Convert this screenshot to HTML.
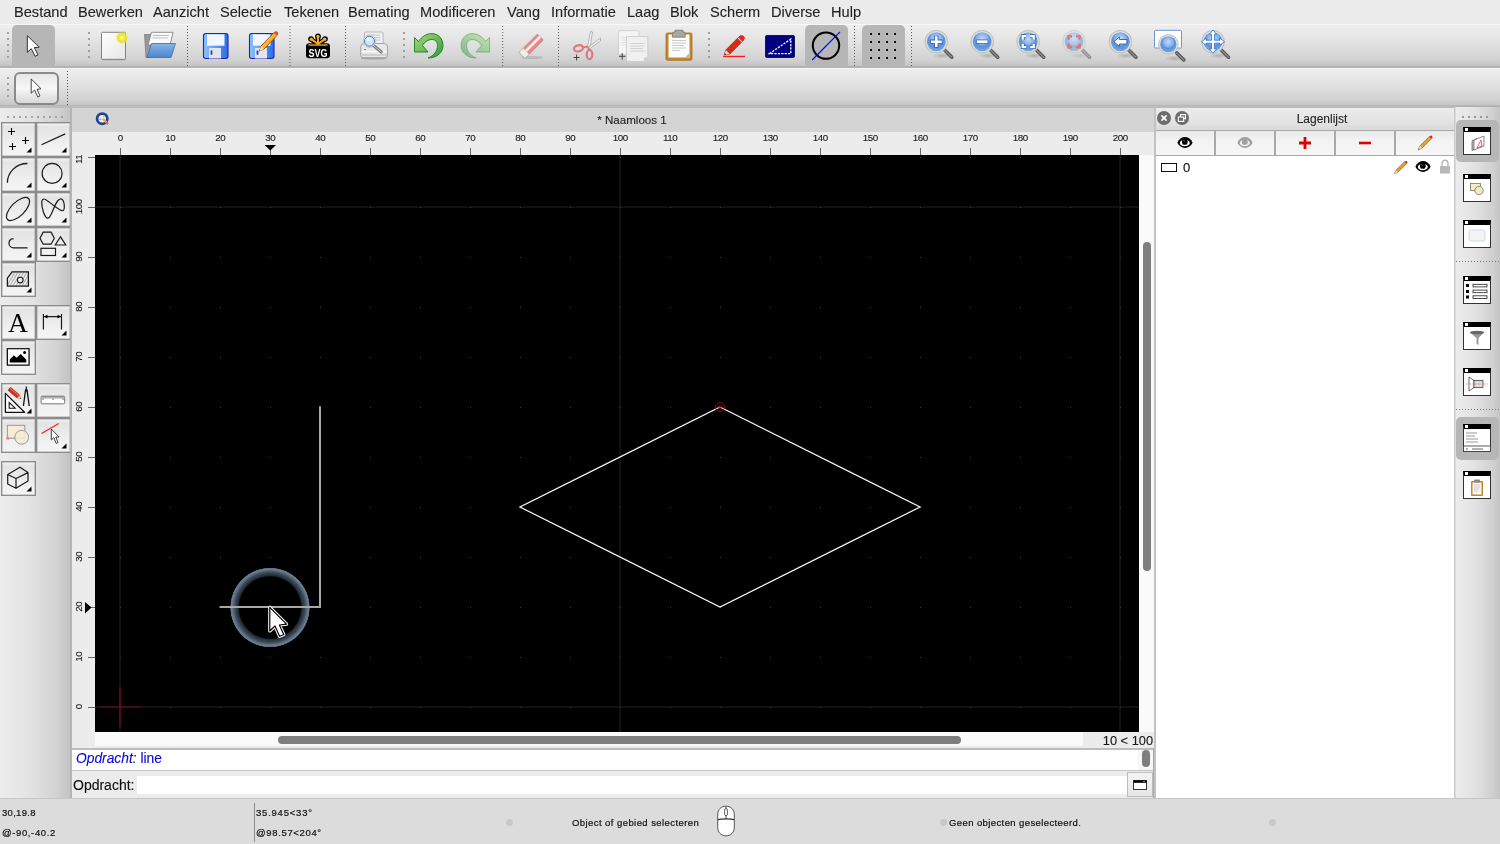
<!DOCTYPE html>
<html><head><meta charset="utf-8">
<style>
*{box-sizing:border-box}
html,body{margin:0;padding:0}
body{will-change:transform;width:1500px;height:844px;overflow:hidden;position:relative;background:#ececec;font-family:"Liberation Sans",sans-serif;color:#1a1a1a;-webkit-text-stroke:0.12px currentColor}
.a{position:absolute}
svg.a{overflow:visible}
.menu{left:0;top:0;width:1500px;height:24px;background:#ebebeb}
.menu span{position:absolute;top:5px;font-size:14.6px;line-height:14px;color:#222;white-space:nowrap;-webkit-text-stroke:0.1px #222}
.tbar{left:0;width:1500px;background:linear-gradient(#eeeeee 0%,#e6e6e6 30%,#d3d3d3 78%,#c6c6c6 94%,#b0b0b0 97%,#b0b0b0 100%)}
.hd{position:absolute;width:2px;height:2px;background:#a2a2a2}
.sep{position:absolute;width:1px;background-image:linear-gradient(#555 0,#555 1px,transparent 1px);background-size:1px 3px}
.selb{position:absolute;background:#b6b6b6;border-radius:5px}
.toolbox{left:0;top:107px;width:71px;height:691px;background:linear-gradient(90deg,#ececec 0%,#e4e4e4 40%,#d2d2d2 80%,#c2c2c2 100%)}
.tbtn{position:absolute;width:35px;height:35px;border:1px solid #8c8c8c;box-shadow:inset 0 0 0 0.5px #a8a8a8;background:linear-gradient(#f4f4f4 0%,#e4e4e4 12%,#eaeaea 40%,#f2f2f2 75%,#f4f4f4 100%)}
.tri{position:absolute;right:2px;bottom:2px;width:0;height:0;border-left:7px solid transparent;border-bottom:7px solid #000}
.status{left:0;top:798px;width:1500px;height:46px;background:#dcdcdc;border-top:1px solid #c6c6c6}
.st{position:absolute;font-size:9.5px;line-height:10px;color:#111;white-space:nowrap;-webkit-text-stroke:0.2px #111}
.rl{font-size:9.8px;line-height:10px;text-align:center;color:#1a1a1a;letter-spacing:-0.45px;text-indent:0.45px}
.rlv{font-size:9.8px;line-height:10px;text-align:center;color:#1a1a1a;transform:rotate(-90deg);height:10px;letter-spacing:-0.45px;text-indent:0.45px}
.tabi{left:1463px;width:28px;height:28px;background:#fff;border:1px solid #333;border-top:5px solid #000}
.tabi:before{content:"";position:absolute;left:1px;top:-4px;width:3px;height:3px;background:#fff}
.dbtn{height:24px;background:linear-gradient(#e9e9e9 0%,#f3f3f3 40%,#f6f6f6 100%)}
</style></head><body>

<!-- MENU -->
<div class="a menu">
<span style="left:14px">Bestand</span>
<span style="left:78px">Bewerken</span>
<span style="left:153px">Aanzicht</span>
<span style="left:220px">Selectie</span>
<span style="left:284px">Tekenen</span>
<span style="left:348px">Bemating</span>
<span style="left:420px">Modificeren</span>
<span style="left:507px">Vang</span>
<span style="left:551px">Informatie</span>
<span style="left:627px">Laag</span>
<span style="left:670px">Blok</span>
<span style="left:710px">Scherm</span>
<span style="left:771px">Diverse</span>
<span style="left:831px">Hulp</span>
</div>

<!-- TOOLBAR 1 -->
<div class="a tbar" style="top:24px;height:44px;border-top:1px solid #f7f7f7"></div>
<svg class="a" style="left:0;top:24px" width="1500" height="44" viewBox="0 24 1500 44">
<defs><linearGradient id="gpap" x1="0" y1="0" x2="1" y2="1"><stop offset="0" stop-color="#fff"/><stop offset="1" stop-color="#e6e6e6"/></linearGradient><radialGradient id="gsun"><stop offset="0" stop-color="#fffff0"/><stop offset="0.35" stop-color="#f4ec30"/><stop offset="0.7" stop-color="#ece030" stop-opacity="0.9"/><stop offset="1" stop-color="#f0e840" stop-opacity="0"/></radialGradient><linearGradient id="gflop" x1="0" y1="0" x2="1" y2="0"><stop offset="0" stop-color="#8fc0ff"/><stop offset="0.5" stop-color="#5a9cf6"/><stop offset="1" stop-color="#2a6ae8"/></linearGradient><linearGradient id="gfold" x1="0" y1="0" x2="0" y2="1"><stop offset="0" stop-color="#8ab4e6"/><stop offset="1" stop-color="#4a86d0"/></linearGradient><linearGradient id="gund" x1="0" y1="0" x2="1" y2="1"><stop offset="0" stop-color="#a6dc78"/><stop offset="1" stop-color="#2f9a3c"/></linearGradient><radialGradient id="glens" cx="0.5" cy="0.35" r="0.7"><stop offset="0" stop-color="#c4daf6"/><stop offset="0.45" stop-color="#80aee8"/><stop offset="0.55" stop-color="#5b90da"/><stop offset="1" stop-color="#7aaae6"/></radialGradient><radialGradient id="grim"><stop offset="0.8" stop-color="#f4f4f2"/><stop offset="1" stop-color="#b8b8b0"/></radialGradient><radialGradient id="gsh"><stop offset="0" stop-color="#000" stop-opacity="0.18"/><stop offset="1" stop-color="#000" stop-opacity="0"/></radialGradient></defs>
<rect x="7" y="32" width="2" height="2" fill="#a0a0a0"/><rect x="7" y="38" width="2" height="2" fill="#a0a0a0"/><rect x="7" y="44" width="2" height="2" fill="#a0a0a0"/><rect x="7" y="50" width="2" height="2" fill="#a0a0a0"/><rect x="7" y="56" width="2" height="2" fill="#a0a0a0"/>
<rect x="12" y="25" width="43" height="48" rx="5" fill="#b6b6b6"/>
<path d="M27.3 35.7V52.3L31.3 48.7L35.1 56.3L38 55L34.3 47.6L39.2 47.2Z" fill="#fff" stroke="#333" stroke-width="1" stroke-linejoin="round"/>
<rect x="88" y="32" width="2" height="2" fill="#a0a0a0"/><rect x="88" y="38" width="2" height="2" fill="#a0a0a0"/><rect x="88" y="44" width="2" height="2" fill="#a0a0a0"/><rect x="88" y="50" width="2" height="2" fill="#a0a0a0"/><rect x="88" y="56" width="2" height="2" fill="#a0a0a0"/>
<rect x="101.5" y="33" width="24" height="27.5" rx="1" fill="#999" opacity="0.5"/>
<rect x="101.5" y="32.3" width="24" height="27" rx="1" fill="url(#gpap)" stroke="#808080" stroke-width="1"/>
<circle cx="122" cy="37.8" r="6.5" fill="url(#gsun)"/>
<path d="M144.5 34.5H152L149 57.5H146Z" fill="#9a9a9a" stroke="#666" stroke-width="0.6"/>
<path d="M151.5 32.3H173L170 45H148Z" fill="#fafafa" stroke="#777" stroke-width="0.8"/>
<path d="M153 35.5H169M152.5 38H168" stroke="#bbb" stroke-width="1.2"/>
<path d="M151.5 43.5H175.5L171 57.5H147Z" fill="url(#gfold)" stroke="#3a6ab0" stroke-width="0.8"/>
<rect x="187.0" y="26" width="1" height="1" fill="#5a5a5a"/><rect x="187.0" y="29" width="1" height="1" fill="#5a5a5a"/><rect x="187.0" y="32" width="1" height="1" fill="#5a5a5a"/><rect x="187.0" y="35" width="1" height="1" fill="#5a5a5a"/><rect x="187.0" y="38" width="1" height="1" fill="#5a5a5a"/><rect x="187.0" y="41" width="1" height="1" fill="#5a5a5a"/><rect x="187.0" y="44" width="1" height="1" fill="#5a5a5a"/><rect x="187.0" y="47" width="1" height="1" fill="#5a5a5a"/><rect x="187.0" y="50" width="1" height="1" fill="#5a5a5a"/><rect x="187.0" y="53" width="1" height="1" fill="#5a5a5a"/><rect x="187.0" y="56" width="1" height="1" fill="#5a5a5a"/><rect x="187.0" y="59" width="1" height="1" fill="#5a5a5a"/><rect x="187.0" y="62" width="1" height="1" fill="#5a5a5a"/><rect x="187.0" y="65" width="1" height="1" fill="#5a5a5a"/>
<rect x="203.5" y="33.5" width="24.5" height="25" rx="2.2" fill="url(#gflop)" stroke="#2028a8" stroke-width="1.1"/><rect x="207" y="34.3" width="17.5" height="11.4" fill="#f4f6ff"/><rect x="209" y="48" width="12" height="10.5" fill="#e4e4ec"/><rect x="210.6" y="50.5" width="1.8" height="4.2" fill="#1a3ad0"/>
<rect x="249.5" y="33.5" width="24.5" height="25" rx="2.2" fill="url(#gflop)" stroke="#2028a8" stroke-width="1.1"/><rect x="253" y="34.3" width="17.5" height="11.4" fill="#f4f6ff"/><rect x="255" y="48" width="12" height="10.5" fill="#e4e4ec"/><rect x="256.6" y="50.5" width="1.8" height="4.2" fill="#1a3ad0"/>
<path d="M259.5 51L261 46L274 32.5L277 35.5L264 49Z" fill="#f6b820" stroke="#a03010" stroke-width="0.8"/><path d="M274 32.5L277 35.5L278 34.2C278.6 33.4 278 32 277 31.5C276.2 31 275.5 31.2 275 31.6Z" fill="#e84a2a"/><path d="M259.5 51L261 46L264 49Z" fill="#f6e0b0"/>
<rect x="289.5" y="26" width="1" height="1" fill="#5a5a5a"/><rect x="289.5" y="29" width="1" height="1" fill="#5a5a5a"/><rect x="289.5" y="32" width="1" height="1" fill="#5a5a5a"/><rect x="289.5" y="35" width="1" height="1" fill="#5a5a5a"/><rect x="289.5" y="38" width="1" height="1" fill="#5a5a5a"/><rect x="289.5" y="41" width="1" height="1" fill="#5a5a5a"/><rect x="289.5" y="44" width="1" height="1" fill="#5a5a5a"/><rect x="289.5" y="47" width="1" height="1" fill="#5a5a5a"/><rect x="289.5" y="50" width="1" height="1" fill="#5a5a5a"/><rect x="289.5" y="53" width="1" height="1" fill="#5a5a5a"/><rect x="289.5" y="56" width="1" height="1" fill="#5a5a5a"/><rect x="289.5" y="59" width="1" height="1" fill="#5a5a5a"/><rect x="289.5" y="62" width="1" height="1" fill="#5a5a5a"/><rect x="289.5" y="65" width="1" height="1" fill="#5a5a5a"/>
<rect x="306" y="43.2" width="24" height="15" rx="3.2" fill="#000"/>
<g stroke="#000" stroke-width="4.8" stroke-linecap="round" fill="none"><path d="M318 45V36.5M318 45L311.3 39.2M318 45L324.7 39.2"/></g>
<g fill="#000"><circle cx="318" cy="36.3" r="2.8"/><circle cx="311" cy="39" r="2.8"/><circle cx="325" cy="39" r="2.8"/></g>
<g stroke="#f2a830" stroke-width="2" stroke-linecap="round" fill="none"><path d="M318 44V37M318 44L311.6 39.4M318 44L324.4 39.4"/></g>
<g fill="#f2a830"><circle cx="318" cy="36.5" r="1.7"/><circle cx="311.3" cy="39.2" r="1.7"/><circle cx="324.7" cy="39.2" r="1.7"/></g>
<path d="M308.5 45H327.5" stroke="#f2a830" stroke-width="1.4"/>
<text x="318" y="56.7" font-family="Liberation Sans" font-weight="bold" font-size="11" text-anchor="middle" fill="#fff" transform="translate(318 0) scale(0.82 1.05) translate(-318 -2.6)">SVG</text>
<rect x="345.0" y="26" width="1" height="1" fill="#5a5a5a"/><rect x="345.0" y="29" width="1" height="1" fill="#5a5a5a"/><rect x="345.0" y="32" width="1" height="1" fill="#5a5a5a"/><rect x="345.0" y="35" width="1" height="1" fill="#5a5a5a"/><rect x="345.0" y="38" width="1" height="1" fill="#5a5a5a"/><rect x="345.0" y="41" width="1" height="1" fill="#5a5a5a"/><rect x="345.0" y="44" width="1" height="1" fill="#5a5a5a"/><rect x="345.0" y="47" width="1" height="1" fill="#5a5a5a"/><rect x="345.0" y="50" width="1" height="1" fill="#5a5a5a"/><rect x="345.0" y="53" width="1" height="1" fill="#5a5a5a"/><rect x="345.0" y="56" width="1" height="1" fill="#5a5a5a"/><rect x="345.0" y="59" width="1" height="1" fill="#5a5a5a"/><rect x="345.0" y="62" width="1" height="1" fill="#5a5a5a"/><rect x="345.0" y="65" width="1" height="1" fill="#5a5a5a"/>
<ellipse cx="374" cy="58" rx="13" ry="1.6" fill="#000" opacity="0.2"/>
<rect x="364.5" y="32" width="18.6" height="14" rx="1" fill="#efefef" stroke="#b4b4b4" stroke-width="0.9"/>
<path d="M367 35H380M367 37.5H380M367 40H380" stroke="#c8c8c8" stroke-width="1"/>
<path d="M360.8 47.2Q360.8 43.5 364 43.5H384.2Q387.6 43.5 387.6 47.2V55.3Q387.6 57.7 385.2 57.7H363.2Q360.8 57.7 360.8 55.3Z" fill="#e8e8e8" stroke="#9c9c9c" stroke-width="0.9"/>
<path d="M361.5 51.5H387" stroke="#fcfcfc" stroke-width="1.2"/><path d="M361.5 55H387" stroke="#cfcfcf" stroke-width="2"/>
<path d="M364 49.5H366" stroke="#666" stroke-width="0.8"/>
<path d="M373.5 45.5L381.3 52" stroke="#7a7a7a" stroke-width="3" stroke-linecap="round"/><path d="M373.5 45.5L381.3 52" stroke="#c8c8c8" stroke-width="1" stroke-linecap="round"/>
<circle cx="369.5" cy="41.2" r="6.2" fill="#f4f4f4" stroke="#a8a8a8" stroke-width="0.6"/><circle cx="369.5" cy="41.2" r="5" fill="#d2e2f6" stroke="#4a7cc8" stroke-width="1"/><ellipse cx="368.6" cy="39.5" rx="3" ry="1.8" fill="#f4f8ff" opacity="0.8"/>
<rect x="403" y="32" width="2" height="2" fill="#a0a0a0"/><rect x="403" y="38" width="2" height="2" fill="#a0a0a0"/><rect x="403" y="44" width="2" height="2" fill="#a0a0a0"/><rect x="403" y="50" width="2" height="2" fill="#a0a0a0"/><rect x="403" y="56" width="2" height="2" fill="#a0a0a0"/>
<path d="M414.5 37.5L418.5 41.5C421.5 37 426 33.6 432 33.6C438.5 33.6 443 39 443 45.5C443 52.5 437 58 428 58C434 55.5 437.5 51 437.5 45.5C437.5 41.5 435 39.5 432 39.5C428.5 39.5 425 41.5 422.5 45.5L428 52H414.5Z" fill="url(#gund)" stroke="#1d7a2a" stroke-width="0.9" stroke-linejoin="round"/>
<g transform="translate(904.1 0) scale(-1 1)" opacity="0.5"><path d="M414.5 37.5L418.5 41.5C421.5 37 426 33.6 432 33.6C438.5 33.6 443 39 443 45.5C443 52.5 437 58 428 58C434 55.5 437.5 51 437.5 45.5C437.5 41.5 435 39.5 432 39.5C428.5 39.5 425 41.5 422.5 45.5L428 52H414.5Z" fill="url(#gund)" stroke="#1d7a2a" stroke-width="0.9" stroke-linejoin="round"/></g>
<rect x="502.2" y="26" width="1" height="1" fill="#5a5a5a"/><rect x="502.2" y="29" width="1" height="1" fill="#5a5a5a"/><rect x="502.2" y="32" width="1" height="1" fill="#5a5a5a"/><rect x="502.2" y="35" width="1" height="1" fill="#5a5a5a"/><rect x="502.2" y="38" width="1" height="1" fill="#5a5a5a"/><rect x="502.2" y="41" width="1" height="1" fill="#5a5a5a"/><rect x="502.2" y="44" width="1" height="1" fill="#5a5a5a"/><rect x="502.2" y="47" width="1" height="1" fill="#5a5a5a"/><rect x="502.2" y="50" width="1" height="1" fill="#5a5a5a"/><rect x="502.2" y="53" width="1" height="1" fill="#5a5a5a"/><rect x="502.2" y="56" width="1" height="1" fill="#5a5a5a"/><rect x="502.2" y="59" width="1" height="1" fill="#5a5a5a"/><rect x="502.2" y="62" width="1" height="1" fill="#5a5a5a"/><rect x="502.2" y="65" width="1" height="1" fill="#5a5a5a"/>
<ellipse cx="532" cy="57.5" rx="11" ry="1.6" fill="#000" opacity="0.12"/>
<g transform="rotate(-45 531 46)"><rect x="518" y="42" width="26" height="8.5" rx="1" fill="#e58a8a" stroke="#b86a6a" stroke-width="0.5"/><rect x="518" y="44.6" width="26" height="2.6" fill="#f4f0f0"/><rect x="518" y="42" width="6" height="8.5" fill="#eee" stroke="#aaa" stroke-width="0.5"/></g>
<rect x="558.0" y="26" width="1" height="1" fill="#5a5a5a"/><rect x="558.0" y="29" width="1" height="1" fill="#5a5a5a"/><rect x="558.0" y="32" width="1" height="1" fill="#5a5a5a"/><rect x="558.0" y="35" width="1" height="1" fill="#5a5a5a"/><rect x="558.0" y="38" width="1" height="1" fill="#5a5a5a"/><rect x="558.0" y="41" width="1" height="1" fill="#5a5a5a"/><rect x="558.0" y="44" width="1" height="1" fill="#5a5a5a"/><rect x="558.0" y="47" width="1" height="1" fill="#5a5a5a"/><rect x="558.0" y="50" width="1" height="1" fill="#5a5a5a"/><rect x="558.0" y="53" width="1" height="1" fill="#5a5a5a"/><rect x="558.0" y="56" width="1" height="1" fill="#5a5a5a"/><rect x="558.0" y="59" width="1" height="1" fill="#5a5a5a"/><rect x="558.0" y="62" width="1" height="1" fill="#5a5a5a"/><rect x="558.0" y="65" width="1" height="1" fill="#5a5a5a"/>
<path d="M587.5 47L590.5 31.5L592.5 32L590 47Z" fill="#f4f4f4" stroke="#999" stroke-width="0.7"/><path d="M588 47.5L600.5 38L600.5 41L590 48.5Z" fill="#f4f4f4" stroke="#999" stroke-width="0.7"/>
<ellipse cx="578.5" cy="48.3" rx="4.6" ry="3" transform="rotate(-15 578.5 48.3)" fill="none" stroke="#e07a7a" stroke-width="2.2"/>
<ellipse cx="589.5" cy="54.5" rx="2.8" ry="4.6" fill="none" stroke="#e07a7a" stroke-width="2.2"/>
<path d="M583 47.5L588 46.5M588 47L589 50" stroke="#e07a7a" stroke-width="2"/>
<path d="M573.6 57.5H579.6M576.6 54.5V60.5" stroke="#333" stroke-width="0.9"/>
<rect x="618.5" y="30.6" width="20.5" height="24" rx="1.5" fill="#f4f4f4" stroke="#ccc" stroke-width="0.8"/>
<path d="M621.5 37.5H631M621.5 40H631M621.5 42.5H631M621.5 45H631" stroke="#ddd" stroke-width="0.9"/>
<path d="M626.5 36.5H647.8V57.5L644 61.4H626.5Z" fill="#f0f0f0" stroke="#c8c8c8" stroke-width="0.8"/><path d="M644 61.4V57.5H647.8Z" fill="#ccc"/>
<path d="M630.5 43.5H644.5M630.5 46H644M630.5 48.5H642.5M630.5 51H644.5" stroke="#ccc" stroke-width="0.9"/>
<path d="M619 56.3H625.5M622.2 53V59.6" stroke="#333" stroke-width="0.9"/>
<rect x="666" y="33" width="26" height="27.3" rx="1.5" fill="#c8862a" stroke="#9a6418" stroke-width="0.7"/>
<path d="M668.5 34.5H689.5V57.5H668.5Z" fill="#fbfbfb"/><path d="M685 57.5H689.5V53Z" fill="#bbb"/>
<path d="M672 40.5H686M672 43H686M672 45.5H684M672 48H686M672 50.5H680" stroke="#c4c4c4" stroke-width="0.9"/>
<path d="M672.4 33.5Q672.4 32 674 32H675V30.2H683V32H684Q685.2 32 685.2 33.5V37.2H672.4Z" fill="#a8a89e" stroke="#6e6e66" stroke-width="0.7"/>
<rect x="708" y="32" width="2" height="2" fill="#a0a0a0"/><rect x="708" y="38" width="2" height="2" fill="#a0a0a0"/><rect x="708" y="44" width="2" height="2" fill="#a0a0a0"/><rect x="708" y="50" width="2" height="2" fill="#a0a0a0"/><rect x="708" y="56" width="2" height="2" fill="#a0a0a0"/>
<path d="M724.3 55L725.8 50L739.5 36.3L743.5 40.3L729.8 54Z" fill="#d82a1a" stroke="#7a2a10" stroke-width="0.7"/><path d="M739.5 36.3L743.5 40.3L744.6 39C745.2 38 744.6 36.6 743.6 36C742.6 35.3 741.6 35.3 740.8 35Z" fill="#f02020"/><path d="M738 37.8L742 41.8" stroke="#d0d0d0" stroke-width="1.1"/><path d="M724.3 55L725.8 50L729.8 54Z" fill="#f2d4b0"/><path d="M724.3 55L724.9 53.2L726.2 54.4Z" fill="#111"/>
<rect x="723" y="55.8" width="22" height="1.3" fill="#ff1a1a"/>
<rect x="765.5" y="35.5" width="29" height="22" rx="1.2" fill="#000080" stroke="#000040" stroke-width="0.8"/>
<path d="M769.5 53.6L790.8 39.1V53.6Z" fill="none" stroke="#fff" stroke-width="1.3" stroke-dasharray="2.2 1.2"/>
<rect x="805" y="25" width="43" height="48" rx="5" fill="#b6b6b6"/>
<circle cx="826" cy="45.6" r="13.2" fill="none" stroke="#000" stroke-width="2"/>
<path d="M812.2 60L840 31.8" stroke="#0000ff" stroke-width="1.1"/>
<rect x="854.0" y="26" width="1" height="1" fill="#5a5a5a"/><rect x="854.0" y="29" width="1" height="1" fill="#5a5a5a"/><rect x="854.0" y="32" width="1" height="1" fill="#5a5a5a"/><rect x="854.0" y="35" width="1" height="1" fill="#5a5a5a"/><rect x="854.0" y="38" width="1" height="1" fill="#5a5a5a"/><rect x="854.0" y="41" width="1" height="1" fill="#5a5a5a"/><rect x="854.0" y="44" width="1" height="1" fill="#5a5a5a"/><rect x="854.0" y="47" width="1" height="1" fill="#5a5a5a"/><rect x="854.0" y="50" width="1" height="1" fill="#5a5a5a"/><rect x="854.0" y="53" width="1" height="1" fill="#5a5a5a"/><rect x="854.0" y="56" width="1" height="1" fill="#5a5a5a"/><rect x="854.0" y="59" width="1" height="1" fill="#5a5a5a"/><rect x="854.0" y="62" width="1" height="1" fill="#5a5a5a"/><rect x="854.0" y="65" width="1" height="1" fill="#5a5a5a"/>
<rect x="862" y="25" width="43" height="48" rx="5" fill="#b6b6b6"/>
<rect x="870" y="33" width="2" height="2" fill="#000"/>
<rect x="878" y="33" width="2" height="2" fill="#000"/>
<rect x="886" y="33" width="2" height="2" fill="#000"/>
<rect x="894" y="33" width="2" height="2" fill="#000"/>
<rect x="870" y="41" width="2" height="2" fill="#000"/>
<rect x="878" y="41" width="2" height="2" fill="#000"/>
<rect x="886" y="41" width="2" height="2" fill="#000"/>
<rect x="894" y="41" width="2" height="2" fill="#000"/>
<rect x="870" y="49" width="2" height="2" fill="#000"/>
<rect x="878" y="49" width="2" height="2" fill="#000"/>
<rect x="886" y="49" width="2" height="2" fill="#000"/>
<rect x="894" y="49" width="2" height="2" fill="#000"/>
<rect x="870" y="57" width="2" height="2" fill="#000"/>
<rect x="878" y="57" width="2" height="2" fill="#000"/>
<rect x="886" y="57" width="2" height="2" fill="#000"/>
<rect x="894" y="57" width="2" height="2" fill="#000"/>
<rect x="911.0" y="26" width="1" height="1" fill="#5a5a5a"/><rect x="911.0" y="29" width="1" height="1" fill="#5a5a5a"/><rect x="911.0" y="32" width="1" height="1" fill="#5a5a5a"/><rect x="911.0" y="35" width="1" height="1" fill="#5a5a5a"/><rect x="911.0" y="38" width="1" height="1" fill="#5a5a5a"/><rect x="911.0" y="41" width="1" height="1" fill="#5a5a5a"/><rect x="911.0" y="44" width="1" height="1" fill="#5a5a5a"/><rect x="911.0" y="47" width="1" height="1" fill="#5a5a5a"/><rect x="911.0" y="50" width="1" height="1" fill="#5a5a5a"/><rect x="911.0" y="53" width="1" height="1" fill="#5a5a5a"/><rect x="911.0" y="56" width="1" height="1" fill="#5a5a5a"/><rect x="911.0" y="59" width="1" height="1" fill="#5a5a5a"/><rect x="911.0" y="62" width="1" height="1" fill="#5a5a5a"/><rect x="911.0" y="65" width="1" height="1" fill="#5a5a5a"/>
<g><ellipse cx="942.3" cy="55.7" rx="10" ry="3" fill="url(#gsh)"/><path d="M944.8 50.2L951.8 57.2" stroke="#555" stroke-width="3.6" stroke-linecap="round"/><path d="M944.8 50.2L951.8 57.2" stroke="#8a8a8a" stroke-width="1.4" stroke-linecap="round"/><circle cx="936.3" cy="41.7" r="11.5" fill="url(#grim)" stroke="#c4c4bc" stroke-width="0.6"/><circle cx="936.3" cy="41.7" r="9.5" fill="url(#glens)"/><path d="M936.3 35.7V47.7M930.3 41.7H942.3" stroke="#2a5aa8" stroke-width="4.2"/><path d="M936.3 36.3V47.1M930.9 41.7H941.6999999999999" stroke="#fff" stroke-width="2.6"/></g>
<g><ellipse cx="988.2" cy="55.7" rx="10" ry="3" fill="url(#gsh)"/><path d="M990.7 50.2L997.7 57.2" stroke="#555" stroke-width="3.6" stroke-linecap="round"/><path d="M990.7 50.2L997.7 57.2" stroke="#8a8a8a" stroke-width="1.4" stroke-linecap="round"/><circle cx="982.2" cy="41.7" r="11.5" fill="url(#grim)" stroke="#c4c4bc" stroke-width="0.6"/><circle cx="982.2" cy="41.7" r="9.5" fill="url(#glens)"/><rect x="976.2" y="39.6" width="12" height="4.2" fill="#2a5aa8"/><rect x="976.8000000000001" y="40.3" width="10.8" height="2.8" fill="#fff"/></g>
<g><ellipse cx="1034.2" cy="55.7" rx="10" ry="3" fill="url(#gsh)"/><path d="M1036.7 50.2L1043.7 57.2" stroke="#555" stroke-width="3.6" stroke-linecap="round"/><path d="M1036.7 50.2L1043.7 57.2" stroke="#8a8a8a" stroke-width="1.4" stroke-linecap="round"/><circle cx="1028.2" cy="41.7" r="11.5" fill="url(#grim)" stroke="#c4c4bc" stroke-width="0.6"/><circle cx="1028.2" cy="41.7" r="9.5" fill="url(#glens)"/><path d="M1022.7 39.7V36.2H1026.2M1030.2 36.2H1033.7V39.7M1033.7 43.7V47.2H1030.2M1026.2 47.2H1022.7V43.7" fill="none" stroke="#2a5aa8" stroke-width="3.8"/><path d="M1022.7 39.7V36.2H1026.2M1030.2 36.2H1033.7V39.7M1033.7 43.7V47.2H1030.2M1026.2 47.2H1022.7V43.7" fill="none" stroke="#fff" stroke-width="2.3"/></g>
<g opacity="0.55"><ellipse cx="1080" cy="55.7" rx="10" ry="3" fill="url(#gsh)"/><path d="M1082.5 50.2L1089.5 57.2" stroke="#555" stroke-width="3.6" stroke-linecap="round"/><path d="M1082.5 50.2L1089.5 57.2" stroke="#8a8a8a" stroke-width="1.4" stroke-linecap="round"/><circle cx="1074" cy="41.7" r="11.5" fill="url(#grim)" stroke="#c4c4bc" stroke-width="0.6"/><circle cx="1074" cy="41.7" r="9.5" fill="url(#glens)"/><path d="M1068.5 39.7V36.2H1072M1076 36.2H1079.5V39.7M1079.5 43.7V47.2H1076M1072 47.2H1068.5V43.7" fill="none" stroke="#e02020" stroke-width="2.4"/></g>
<g><ellipse cx="1126.4" cy="55.7" rx="10" ry="3" fill="url(#gsh)"/><path d="M1128.9 50.2L1135.9 57.2" stroke="#555" stroke-width="3.6" stroke-linecap="round"/><path d="M1128.9 50.2L1135.9 57.2" stroke="#8a8a8a" stroke-width="1.4" stroke-linecap="round"/><circle cx="1120.4" cy="41.7" r="11.5" fill="url(#grim)" stroke="#c4c4bc" stroke-width="0.6"/><circle cx="1120.4" cy="41.7" r="9.5" fill="url(#glens)"/><path d="M1113.9 41.7L1119.4 37V39.5H1126.9V44H1119.4V46.5Z" fill="#fff" stroke="#2a5aa8" stroke-width="0.9"/></g>
<rect x="1154.5" y="30.3" width="27" height="17.7" rx="1" fill="#fff" stroke="#6a96d8" stroke-width="1"/>
<g><ellipse cx="1174.3" cy="58.4" rx="10" ry="3" fill="url(#gsh)"/><path d="M1176.8 52.9L1183.8 59.9" stroke="#555" stroke-width="3.6" stroke-linecap="round"/><path d="M1176.8 52.9L1183.8 59.9" stroke="#8a8a8a" stroke-width="1.4" stroke-linecap="round"/><circle cx="1168.3" cy="44.4" r="10" fill="url(#grim)" stroke="#c4c4bc" stroke-width="0.6"/><circle cx="1168.3" cy="44.4" r="8.2" fill="url(#glens)"/></g>
<g><ellipse cx="1219" cy="55.7" rx="10" ry="3" fill="url(#gsh)"/><path d="M1221.5 50.2L1228.5 57.2" stroke="#555" stroke-width="3.6" stroke-linecap="round"/><path d="M1221.5 50.2L1228.5 57.2" stroke="#8a8a8a" stroke-width="1.4" stroke-linecap="round"/><circle cx="1213" cy="41.7" r="11.5" fill="url(#grim)" stroke="#c4c4bc" stroke-width="0.6"/><circle cx="1213" cy="41.7" r="9.5" fill="url(#glens)"/></g>
<path d="M1213 30L1209.4 34.4H1211.5V40.2H1206V38.1L1201.6 41.7L1206 45.3V43.2H1211.5V49H1209.4L1213 53.4L1216.6 49H1214.5V43.2H1220V45.3L1224.4 41.7L1220 38.1V40.2H1214.5V34.4H1216.6Z" fill="#fff" stroke="#3a78d8" stroke-width="0.9" stroke-linejoin="round"/>
</svg>
<!-- TOOLBAR 2 -->
<div class="a tbar" style="top:68px;height:39px;border-top:1px solid #f7f7f7"></div>
<svg class="a" style="left:0;top:68px" width="80" height="39" viewBox="0 68 80 39">
<defs><linearGradient id="gb2" x1="0" y1="0" x2="0" y2="1"><stop offset="0" stop-color="#e6e6e6"/><stop offset="0.5" stop-color="#f6f6f6"/><stop offset="1" stop-color="#d6d6d6"/></linearGradient></defs>
<rect x="7" y="77" width="2" height="2" fill="#a0a0a0"/><rect x="7" y="83" width="2" height="2" fill="#a0a0a0"/><rect x="7" y="89" width="2" height="2" fill="#a0a0a0"/><rect x="7" y="95" width="2" height="2" fill="#a0a0a0"/>
<rect x="15" y="73" width="43" height="31" rx="5" fill="url(#gb2)" stroke="#8a8a8a" stroke-width="2"/>
<path d="M31.2 79V93.2L34.6 90L37.8 97L40 96L37 89.3L41 88.8Z" fill="#fff" stroke="#333" stroke-width="0.9" stroke-linejoin="round"/>
<rect x="67.0" y="71" width="1" height="1" fill="#5a5a5a"/><rect x="67.0" y="74" width="1" height="1" fill="#5a5a5a"/><rect x="67.0" y="77" width="1" height="1" fill="#5a5a5a"/><rect x="67.0" y="80" width="1" height="1" fill="#5a5a5a"/><rect x="67.0" y="83" width="1" height="1" fill="#5a5a5a"/><rect x="67.0" y="86" width="1" height="1" fill="#5a5a5a"/><rect x="67.0" y="89" width="1" height="1" fill="#5a5a5a"/><rect x="67.0" y="92" width="1" height="1" fill="#5a5a5a"/><rect x="67.0" y="95" width="1" height="1" fill="#5a5a5a"/><rect x="67.0" y="98" width="1" height="1" fill="#5a5a5a"/><rect x="67.0" y="101" width="1" height="1" fill="#5a5a5a"/><rect x="67.0" y="104" width="1" height="1" fill="#5a5a5a"/>
</svg>

<!-- LEFT TOOLBOX -->
<div class="a toolbox"></div>
<div class="a" style="left:7px;top:116px;width:57px;height:2px;background-image:linear-gradient(90deg,#a4a4a4 0,#a4a4a4 2px,transparent 2px);background-size:6px 2px"></div>
<div class="tbtn" style="left:1px;top:122px"></div>
<svg class="a" style="left:1px;top:122px" width="35" height="35"><path d="M7 9.5H14M10.5 6V13M21 18.5H28M24.5 15V22M8 24.5H15M11.5 21V28" stroke="#000" stroke-width="1.1"/></svg>
<svg class="a" style="left:1px;top:122px" width="35" height="35"><path d="M25.5 30.5H30.5V25.5Z" fill="#000"/></svg>
<div class="tbtn" style="left:36px;top:122px"></div>
<svg class="a" style="left:36px;top:122px" width="35" height="35"><path d="M5.5 22.7L29.2 11.9" stroke="#1a1a1a" fill="none" stroke-width="1.2"/></svg>
<svg class="a" style="left:36px;top:122px" width="35" height="35"><path d="M25.5 30.5H30.5V25.5Z" fill="#000"/></svg>
<div class="tbtn" style="left:1px;top:157px"></div>
<svg class="a" style="left:1px;top:157px" width="35" height="35"><path d="M6.4 25.8A20 19.3 0 0 1 26.4 6.5" stroke="#1a1a1a" fill="none" stroke-width="1.3"/></svg>
<svg class="a" style="left:1px;top:157px" width="35" height="35"><path d="M25.5 30.5H30.5V25.5Z" fill="#000"/></svg>
<div class="tbtn" style="left:36px;top:157px"></div>
<svg class="a" style="left:36px;top:157px" width="35" height="35"><circle cx="16.1" cy="16.4" r="10" stroke="#1a1a1a" fill="none" stroke-width="1.2"/></svg>
<svg class="a" style="left:36px;top:157px" width="35" height="35"><path d="M25.5 30.5H30.5V25.5Z" fill="#000"/></svg>
<div class="tbtn" style="left:1px;top:192px"></div>
<svg class="a" style="left:1px;top:192px" width="35" height="35"><ellipse cx="17" cy="17" rx="14.8" ry="6.8" transform="rotate(-45 17 17)" stroke="#1a1a1a" fill="none" stroke-width="1.2"/></svg>
<svg class="a" style="left:1px;top:192px" width="35" height="35"><path d="M25.5 30.5H30.5V25.5Z" fill="#000"/></svg>
<div class="tbtn" style="left:36px;top:192px"></div>
<svg class="a" style="left:36px;top:192px" width="35" height="35"><path d="M5.8 9.5C5.2 15 8.5 26.5 12 26.2C15.5 25.8 17.5 13.5 22 8.5C25.5 4.8 28.5 8 28.3 15.5C28 21.5 24 18 19 14.5C14 11 9.5 6.5 7.8 7C6.3 7.4 5.9 8.4 5.8 9.5Z" stroke="#1a1a1a" fill="none" stroke-width="1.2"/></svg>
<svg class="a" style="left:36px;top:192px" width="35" height="35"><path d="M25.5 30.5H30.5V25.5Z" fill="#000"/></svg>
<div class="tbtn" style="left:1px;top:227px"></div>
<svg class="a" style="left:1px;top:227px" width="35" height="35"><path d="M12.6 11.6C10 11.8 8 13.7 8 16.2C8 18.7 10 20.8 12.6 20.8H26.6" stroke="#1a1a1a" fill="none" stroke-width="1.2"/></svg>
<svg class="a" style="left:1px;top:227px" width="35" height="35"><path d="M25.5 30.5H30.5V25.5Z" fill="#000"/></svg>
<div class="tbtn" style="left:36px;top:227px"></div>
<svg class="a" style="left:36px;top:227px" width="35" height="35"><path d="M7.2 5.2H15.1L18.3 11.2L15.1 17.2H7.2L4 11.2Z" stroke="#1a1a1a" fill="none" stroke-width="1.2"/><path d="M24.5 9.8L29.8 18H19.3Z" stroke="#1a1a1a" fill="none" stroke-width="1.2"/><rect x="5" y="21.3" width="14.5" height="7.2" stroke="#1a1a1a" fill="none" stroke-width="1.2"/></svg>
<svg class="a" style="left:36px;top:227px" width="35" height="35"><path d="M25.5 30.5H30.5V25.5Z" fill="#000"/></svg>
<div class="tbtn" style="left:1px;top:262px"></div>
<svg class="a" style="left:1px;top:262px" width="35" height="35"><defs><clipPath id="hc"><path d="M11.1 9.8H27.4V24.2H6.4V16.2Z"/></clipPath></defs><g clip-path="url(#hc)"><path d="M6 24L14 10M9 24L17 10M12 24L20 10M15 24L23 10M18 24L26 10M21 24L29 10M24 24L32 10M27 24L35 10" stroke="#888" stroke-width="0.7"/></g><path d="M11.1 9.8H27.4V24.2H6.4V16.2Z" stroke="#1a1a1a" fill="none" stroke-width="1.3"/><circle cx="19.2" cy="18" r="2.8" fill="#f0f0f0" stroke="#1a1a1a" stroke-width="1.1"/></svg>
<svg class="a" style="left:1px;top:262px" width="35" height="35"><path d="M25.5 30.5H30.5V25.5Z" fill="#000"/></svg>
<div class="tbtn" style="left:1px;top:305px"></div>
<svg class="a" style="left:1px;top:305px" width="35" height="35"><text x="16.9" y="27" font-family="Liberation Serif" font-size="27.5" text-anchor="middle" fill="#000">A</text></svg>
<div class="tbtn" style="left:36px;top:305px"></div>
<svg class="a" style="left:36px;top:305px" width="35" height="35"><path d="M7.4 8.9V24.6M25.5 8.9V24.6M8.2 11.6H24.7" stroke="#1a1a1a" fill="none" stroke-width="1.2"/><path d="M8 11.6L11.5 9.8V13.4Z M25 11.6L21.5 9.8V13.4Z" fill="#000"/></svg>
<svg class="a" style="left:36px;top:305px" width="35" height="35"><path d="M25.5 30.5H30.5V25.5Z" fill="#000"/></svg>
<div class="tbtn" style="left:1px;top:340px"></div>
<svg class="a" style="left:1px;top:340px" width="35" height="35"><rect x="6" y="8.3" width="22.4" height="17.2" fill="#fff" stroke="#888" stroke-width="0.6"/><rect x="6.4" y="8.7" width="21.6" height="16.4" fill="#fff" stroke="#111" stroke-width="1.2"/><path d="M8.7 22.5V19.5L12.9 15.3L15.5 17.8L19.8 14L25.3 19.8V22.5Z" fill="#000"/><circle cx="23.6" cy="12.4" r="1.5" fill="#000"/></svg>
<div class="tbtn" style="left:1px;top:383px"></div>
<svg class="a" style="left:1px;top:383px" width="35" height="35"><path d="M4.4 10.4V29.3H23.5Z" fill="#fff" stroke="#111" stroke-width="1.3" stroke-linejoin="round"/><path d="M8.2 19.6V25.2H14.2Z" fill="none" stroke="#111" stroke-width="1.1"/><g transform="rotate(40 14 10.5)"><rect x="6.5" y="8.6" width="12" height="4" rx="0.8" fill="#d82a1a" stroke="#8a1a10" stroke-width="0.5"/><path d="M18.5 8.6L22 10.6L18.5 12.6Z" fill="#e8c890" stroke="#8a6a30" stroke-width="0.4"/><path d="M21 10.1L22 10.6L21 11.1Z" fill="#333"/><rect x="7" y="9.2" width="11" height="1" fill="#f06a5a"/></g><path d="M25.3 3.6V6.2" stroke="#111" stroke-width="1.2"/><circle cx="25.3" cy="7.3" r="1.4" fill="#111"/><path d="M24.4 8.2L22.4 23M26.2 8.2L28.2 23" stroke="#111" stroke-width="1.3" fill="none"/></svg>
<svg class="a" style="left:1px;top:383px" width="35" height="35"><path d="M25.5 30.5H30.5V25.5Z" fill="#000"/></svg>
<div class="tbtn" style="left:36px;top:383px"></div>
<svg class="a" style="left:36px;top:383px" width="35" height="35"><rect x="5.1" y="13.2" width="23.6" height="7.6" rx="1" fill="#fff" stroke="#777" stroke-width="1"/><path d="M7 13.4V17M9 13.4V15.6M11 13.4V15.6M13 13.4V15.6M15 13.4V15.6M17 13.4V17M19 13.4V15.6M21 13.4V15.6M23 13.4V15.6M25 13.4V15.6M27 13.4V17" stroke="#444" stroke-width="0.8"/></svg>
<div class="tbtn" style="left:1px;top:418px"></div>
<svg class="a" style="left:1px;top:418px" width="35" height="35"><rect x="6.4" y="7.3" width="17.4" height="12.9" fill="#f3edd6" stroke="#999" stroke-width="1"/><circle cx="20.7" cy="19.3" r="6.9" fill="#f3edd6" fill-opacity="0.85" stroke="#999" stroke-width="1"/><circle cx="6.9" cy="20.2" r="1.5" fill="#f08080"/></svg>
<div class="tbtn" style="left:36px;top:418px"></div>
<svg class="a" style="left:36px;top:418px" width="35" height="35"><path d="M5.6 15.6L22.7 5.6" stroke="#f02020" stroke-width="1.2"/><path d="M15.3 11V22L17.8 19.6L20.2 25.4L22 24.6L19.8 19H23.1Z" fill="#fff" stroke="#333" stroke-width="0.9" stroke-linejoin="round"/></svg>
<svg class="a" style="left:36px;top:418px" width="35" height="35"><path d="M25.5 30.5H30.5V25.5Z" fill="#000"/></svg>
<div class="tbtn" style="left:1px;top:461px"></div>
<svg class="a" style="left:1px;top:461px" width="35" height="35"><path d="M19 6.3L27 11.6V20.1L15 27.3L6.7 23V13.5ZM6.7 13.5L15 17.5L27 11.6M15 17.5V27.3" stroke="#1a1a1a" fill="none" stroke-width="1.2" stroke-linejoin="round"/></svg>
<svg class="a" style="left:1px;top:461px" width="35" height="35"><path d="M25.5 30.5H30.5V25.5Z" fill="#000"/></svg>

<!-- MDI -->
<div class="a" style="left:0;top:106px;width:1455px;height:2px;background:#bcbcbc"></div>
<div class="a" style="left:70px;top:107px;width:2px;height:691px;background:#b4b4b4"></div>
<div class="a" style="left:72px;top:108px;width:1082px;height:24px;background:#d4d4d4"></div>
<svg class="a" style="left:95px;top:111px" width="16" height="16"><circle cx="7.2" cy="7.7" r="5.1" fill="#eef0f4" stroke="#26448a" stroke-width="2.8"/><path d="M5 6L5.5 9M4 8.5L7 8.2M8.5 5L9 7" stroke="#d88" stroke-width="0.6"/><path d="M7.8 7.8L11.5 11.6" stroke="#f0b020" stroke-width="2.2"/><path d="M11.3 11.4L13 13.2" stroke="#e06060" stroke-width="2"/></svg>
<div class="a" style="left:557px;top:114px;width:150px;text-align:center;font-size:11.6px;line-height:12px;color:#1e1e1e">* Naamloos 1</div>
<div class="a" style="left:72px;top:132px;width:1082px;height:23px;background:#ececec"></div>
<div class="a rl" style="left:105px;top:132.6px;width:30px">0</div>
<div class="a" style="left:120px;top:148px;width:1px;height:7px;background:#666"></div>
<div class="a rl" style="left:155px;top:132.6px;width:30px">10</div>
<div class="a" style="left:170px;top:148px;width:1px;height:7px;background:#666"></div>
<div class="a rl" style="left:205px;top:132.6px;width:30px">20</div>
<div class="a" style="left:220px;top:148px;width:1px;height:7px;background:#666"></div>
<div class="a rl" style="left:255px;top:132.6px;width:30px">30</div>
<div class="a" style="left:270px;top:148px;width:1px;height:7px;background:#666"></div>
<div class="a rl" style="left:305px;top:132.6px;width:30px">40</div>
<div class="a" style="left:320px;top:148px;width:1px;height:7px;background:#666"></div>
<div class="a rl" style="left:355px;top:132.6px;width:30px">50</div>
<div class="a" style="left:370px;top:148px;width:1px;height:7px;background:#666"></div>
<div class="a rl" style="left:405px;top:132.6px;width:30px">60</div>
<div class="a" style="left:420px;top:148px;width:1px;height:7px;background:#666"></div>
<div class="a rl" style="left:455px;top:132.6px;width:30px">70</div>
<div class="a" style="left:470px;top:148px;width:1px;height:7px;background:#666"></div>
<div class="a rl" style="left:505px;top:132.6px;width:30px">80</div>
<div class="a" style="left:520px;top:148px;width:1px;height:7px;background:#666"></div>
<div class="a rl" style="left:555px;top:132.6px;width:30px">90</div>
<div class="a" style="left:570px;top:148px;width:1px;height:7px;background:#666"></div>
<div class="a rl" style="left:605px;top:132.6px;width:30px">100</div>
<div class="a" style="left:620px;top:148px;width:1px;height:7px;background:#666"></div>
<div class="a rl" style="left:655px;top:132.6px;width:30px">110</div>
<div class="a" style="left:670px;top:148px;width:1px;height:7px;background:#666"></div>
<div class="a rl" style="left:705px;top:132.6px;width:30px">120</div>
<div class="a" style="left:720px;top:148px;width:1px;height:7px;background:#666"></div>
<div class="a rl" style="left:755px;top:132.6px;width:30px">130</div>
<div class="a" style="left:770px;top:148px;width:1px;height:7px;background:#666"></div>
<div class="a rl" style="left:805px;top:132.6px;width:30px">140</div>
<div class="a" style="left:820px;top:148px;width:1px;height:7px;background:#666"></div>
<div class="a rl" style="left:855px;top:132.6px;width:30px">150</div>
<div class="a" style="left:870px;top:148px;width:1px;height:7px;background:#666"></div>
<div class="a rl" style="left:905px;top:132.6px;width:30px">160</div>
<div class="a" style="left:920px;top:148px;width:1px;height:7px;background:#666"></div>
<div class="a rl" style="left:955px;top:132.6px;width:30px">170</div>
<div class="a" style="left:970px;top:148px;width:1px;height:7px;background:#666"></div>
<div class="a rl" style="left:1005px;top:132.6px;width:30px">180</div>
<div class="a" style="left:1020px;top:148px;width:1px;height:7px;background:#666"></div>
<div class="a rl" style="left:1055px;top:132.6px;width:30px">190</div>
<div class="a" style="left:1070px;top:148px;width:1px;height:7px;background:#666"></div>
<div class="a rl" style="left:1105px;top:132.6px;width:30px">200</div>
<div class="a" style="left:1120px;top:148px;width:1px;height:7px;background:#666"></div>
<svg class="a" style="left:264px;top:144px" width="13" height="9"><path d="M0.6 1H12L6.3 6.6Z" fill="#000"/></svg>
<div class="a" style="left:72px;top:155px;width:23px;height:577px;background:#ececec;overflow:hidden">
<div class="a rlv" style="left:-8px;top:547px;width:30px">0</div>
<div class="a" style="left:16px;top:552px;width:7px;height:1px;background:#666"></div>
<div class="a rlv" style="left:-8px;top:497px;width:30px">10</div>
<div class="a" style="left:16px;top:502px;width:7px;height:1px;background:#666"></div>
<div class="a rlv" style="left:-8px;top:447px;width:30px">20</div>
<div class="a" style="left:16px;top:452px;width:7px;height:1px;background:#666"></div>
<div class="a rlv" style="left:-8px;top:397px;width:30px">30</div>
<div class="a" style="left:16px;top:402px;width:7px;height:1px;background:#666"></div>
<div class="a rlv" style="left:-8px;top:347px;width:30px">40</div>
<div class="a" style="left:16px;top:352px;width:7px;height:1px;background:#666"></div>
<div class="a rlv" style="left:-8px;top:297px;width:30px">50</div>
<div class="a" style="left:16px;top:302px;width:7px;height:1px;background:#666"></div>
<div class="a rlv" style="left:-8px;top:247px;width:30px">60</div>
<div class="a" style="left:16px;top:252px;width:7px;height:1px;background:#666"></div>
<div class="a rlv" style="left:-8px;top:197px;width:30px">70</div>
<div class="a" style="left:16px;top:202px;width:7px;height:1px;background:#666"></div>
<div class="a rlv" style="left:-8px;top:147px;width:30px">80</div>
<div class="a" style="left:16px;top:152px;width:7px;height:1px;background:#666"></div>
<div class="a rlv" style="left:-8px;top:97px;width:30px">90</div>
<div class="a" style="left:16px;top:102px;width:7px;height:1px;background:#666"></div>
<div class="a rlv" style="left:-8px;top:47px;width:30px">100</div>
<div class="a" style="left:16px;top:52px;width:7px;height:1px;background:#666"></div>
<div class="a rlv" style="left:-8px;top:-3px;width:30px">110</div>
<div class="a" style="left:16px;top:2px;width:7px;height:1px;background:#666"></div>
</div>
<svg class="a" style="left:84px;top:601px" width="9" height="13"><path d="M1 1V12.5L7.5 6.5Z" fill="#000"/></svg>
<svg class="a" style="left:95px;top:155px" width="1044" height="577" viewBox="95 155 1044 577">
<rect x="95" y="155" width="1044" height="577" fill="#000"/>
<rect x="119" y="155" width="2" height="577" fill="#111"/>
<rect x="619" y="155" width="2" height="577" fill="#111"/>
<rect x="1119" y="155" width="2" height="577" fill="#111"/>
<rect x="95" y="206" width="1044" height="2" fill="#111"/>
<rect x="95" y="706" width="1044" height="2" fill="#111"/>
<path fill="#3e3e3e" d="M120 707h1v1h-1zM120 657h1v1h-1zM120 607h1v1h-1zM120 557h1v1h-1zM120 507h1v1h-1zM120 457h1v1h-1zM120 407h1v1h-1zM120 357h1v1h-1zM120 307h1v1h-1zM120 257h1v1h-1zM120 207h1v1h-1zM120 157h1v1h-1zM170 707h1v1h-1zM170 657h1v1h-1zM170 607h1v1h-1zM170 557h1v1h-1zM170 507h1v1h-1zM170 457h1v1h-1zM170 407h1v1h-1zM170 357h1v1h-1zM170 307h1v1h-1zM170 257h1v1h-1zM170 207h1v1h-1zM170 157h1v1h-1zM220 707h1v1h-1zM220 657h1v1h-1zM220 607h1v1h-1zM220 557h1v1h-1zM220 507h1v1h-1zM220 457h1v1h-1zM220 407h1v1h-1zM220 357h1v1h-1zM220 307h1v1h-1zM220 257h1v1h-1zM220 207h1v1h-1zM220 157h1v1h-1zM270 707h1v1h-1zM270 657h1v1h-1zM270 607h1v1h-1zM270 557h1v1h-1zM270 507h1v1h-1zM270 457h1v1h-1zM270 407h1v1h-1zM270 357h1v1h-1zM270 307h1v1h-1zM270 257h1v1h-1zM270 207h1v1h-1zM270 157h1v1h-1zM320 707h1v1h-1zM320 657h1v1h-1zM320 607h1v1h-1zM320 557h1v1h-1zM320 507h1v1h-1zM320 457h1v1h-1zM320 407h1v1h-1zM320 357h1v1h-1zM320 307h1v1h-1zM320 257h1v1h-1zM320 207h1v1h-1zM320 157h1v1h-1zM370 707h1v1h-1zM370 657h1v1h-1zM370 607h1v1h-1zM370 557h1v1h-1zM370 507h1v1h-1zM370 457h1v1h-1zM370 407h1v1h-1zM370 357h1v1h-1zM370 307h1v1h-1zM370 257h1v1h-1zM370 207h1v1h-1zM370 157h1v1h-1zM420 707h1v1h-1zM420 657h1v1h-1zM420 607h1v1h-1zM420 557h1v1h-1zM420 507h1v1h-1zM420 457h1v1h-1zM420 407h1v1h-1zM420 357h1v1h-1zM420 307h1v1h-1zM420 257h1v1h-1zM420 207h1v1h-1zM420 157h1v1h-1zM470 707h1v1h-1zM470 657h1v1h-1zM470 607h1v1h-1zM470 557h1v1h-1zM470 507h1v1h-1zM470 457h1v1h-1zM470 407h1v1h-1zM470 357h1v1h-1zM470 307h1v1h-1zM470 257h1v1h-1zM470 207h1v1h-1zM470 157h1v1h-1zM520 707h1v1h-1zM520 657h1v1h-1zM520 607h1v1h-1zM520 557h1v1h-1zM520 507h1v1h-1zM520 457h1v1h-1zM520 407h1v1h-1zM520 357h1v1h-1zM520 307h1v1h-1zM520 257h1v1h-1zM520 207h1v1h-1zM520 157h1v1h-1zM570 707h1v1h-1zM570 657h1v1h-1zM570 607h1v1h-1zM570 557h1v1h-1zM570 507h1v1h-1zM570 457h1v1h-1zM570 407h1v1h-1zM570 357h1v1h-1zM570 307h1v1h-1zM570 257h1v1h-1zM570 207h1v1h-1zM570 157h1v1h-1zM620 707h1v1h-1zM620 657h1v1h-1zM620 607h1v1h-1zM620 557h1v1h-1zM620 507h1v1h-1zM620 457h1v1h-1zM620 407h1v1h-1zM620 357h1v1h-1zM620 307h1v1h-1zM620 257h1v1h-1zM620 207h1v1h-1zM620 157h1v1h-1zM670 707h1v1h-1zM670 657h1v1h-1zM670 607h1v1h-1zM670 557h1v1h-1zM670 507h1v1h-1zM670 457h1v1h-1zM670 407h1v1h-1zM670 357h1v1h-1zM670 307h1v1h-1zM670 257h1v1h-1zM670 207h1v1h-1zM670 157h1v1h-1zM720 707h1v1h-1zM720 657h1v1h-1zM720 607h1v1h-1zM720 557h1v1h-1zM720 507h1v1h-1zM720 457h1v1h-1zM720 407h1v1h-1zM720 357h1v1h-1zM720 307h1v1h-1zM720 257h1v1h-1zM720 207h1v1h-1zM720 157h1v1h-1zM770 707h1v1h-1zM770 657h1v1h-1zM770 607h1v1h-1zM770 557h1v1h-1zM770 507h1v1h-1zM770 457h1v1h-1zM770 407h1v1h-1zM770 357h1v1h-1zM770 307h1v1h-1zM770 257h1v1h-1zM770 207h1v1h-1zM770 157h1v1h-1zM820 707h1v1h-1zM820 657h1v1h-1zM820 607h1v1h-1zM820 557h1v1h-1zM820 507h1v1h-1zM820 457h1v1h-1zM820 407h1v1h-1zM820 357h1v1h-1zM820 307h1v1h-1zM820 257h1v1h-1zM820 207h1v1h-1zM820 157h1v1h-1zM870 707h1v1h-1zM870 657h1v1h-1zM870 607h1v1h-1zM870 557h1v1h-1zM870 507h1v1h-1zM870 457h1v1h-1zM870 407h1v1h-1zM870 357h1v1h-1zM870 307h1v1h-1zM870 257h1v1h-1zM870 207h1v1h-1zM870 157h1v1h-1zM920 707h1v1h-1zM920 657h1v1h-1zM920 607h1v1h-1zM920 557h1v1h-1zM920 507h1v1h-1zM920 457h1v1h-1zM920 407h1v1h-1zM920 357h1v1h-1zM920 307h1v1h-1zM920 257h1v1h-1zM920 207h1v1h-1zM920 157h1v1h-1zM970 707h1v1h-1zM970 657h1v1h-1zM970 607h1v1h-1zM970 557h1v1h-1zM970 507h1v1h-1zM970 457h1v1h-1zM970 407h1v1h-1zM970 357h1v1h-1zM970 307h1v1h-1zM970 257h1v1h-1zM970 207h1v1h-1zM970 157h1v1h-1zM1020 707h1v1h-1zM1020 657h1v1h-1zM1020 607h1v1h-1zM1020 557h1v1h-1zM1020 507h1v1h-1zM1020 457h1v1h-1zM1020 407h1v1h-1zM1020 357h1v1h-1zM1020 307h1v1h-1zM1020 257h1v1h-1zM1020 207h1v1h-1zM1020 157h1v1h-1zM1070 707h1v1h-1zM1070 657h1v1h-1zM1070 607h1v1h-1zM1070 557h1v1h-1zM1070 507h1v1h-1zM1070 457h1v1h-1zM1070 407h1v1h-1zM1070 357h1v1h-1zM1070 307h1v1h-1zM1070 257h1v1h-1zM1070 207h1v1h-1zM1070 157h1v1h-1zM1120 707h1v1h-1zM1120 657h1v1h-1zM1120 607h1v1h-1zM1120 557h1v1h-1zM1120 507h1v1h-1zM1120 457h1v1h-1zM1120 407h1v1h-1zM1120 357h1v1h-1zM1120 307h1v1h-1zM1120 257h1v1h-1zM1120 207h1v1h-1zM1120 157h1v1h-1z"/>
<path d="M100 707H140M120 687V727" stroke="#7a0c0c" stroke-width="1.2" fill="none"/>
<path d="M720 407L920 507L720 607L520 507Z" stroke="#f2f2f2" stroke-width="1.3" fill="none"/>
<circle cx="720" cy="407" r="4.5" stroke="#8a0a0a" stroke-width="1" fill="none"/>
<path d="M720 402.5V411.5M716 407H724" stroke="#6a0808" stroke-width="0.8"/>
<defs><radialGradient id="ring" cx="270" cy="607.5" r="40" gradientUnits="userSpaceOnUse"><stop offset="0.76" stop-color="#1a2028" stop-opacity="0"/><stop offset="0.80" stop-color="#26303a" stop-opacity="0.9"/><stop offset="0.88" stop-color="#3e4d5b"/><stop offset="0.93" stop-color="#5b6e80"/><stop offset="0.965" stop-color="#6b8094"/><stop offset="0.985" stop-color="#55687a"/><stop offset="1" stop-color="#3a4856" stop-opacity="0"/></radialGradient></defs>
<circle cx="270" cy="607.5" r="40" fill="url(#ring)"/>
<path d="M320 406.2V607H219.5" stroke="#a8a8a8" stroke-width="2" fill="none"/>
<path d="M269.8 607.3V631L275 626L279.6 636.3L283.8 634.5L279.4 625L286.6 624.2Z" fill="#fff" stroke="#fff" stroke-width="3.2" stroke-linejoin="round"/>
<path d="M269.8 607.3V631L275 626L279.6 636.3L283.8 634.5L279.4 625L286.6 624.2Z" fill="#fff" stroke="#000" stroke-width="1.2" stroke-linejoin="round"/>
</svg>
<!-- scrollbars -->
<div class="a" style="left:1139px;top:155px;width:15px;height:577px;background:#fafafa"></div>
<div class="a" style="left:1143px;top:242px;width:8px;height:329px;border-radius:4px;background:#7e7e7e"></div>
<div class="a" style="left:72px;top:732px;width:1011px;height:14px;background:#fafafa"></div>
<div class="a" style="left:72px;top:732px;width:23px;height:14px;background:#ececec"></div>
<div class="a" style="left:278px;top:736px;width:683px;height:8px;border-radius:4px;background:#7e7e7e"></div>
<div class="a" style="left:72px;top:746px;width:1082px;height:2px;background:#ececec"></div>
<div class="a" style="left:1083px;top:732px;width:71px;height:16px;background:#ececec"></div>
<div class="a" style="left:1090px;top:734px;width:63px;text-align:right;font-size:12.8px;line-height:13px;color:#1a1a1a">10 &lt; 100</div>
<div class="a" style="left:72px;top:748px;width:1082px;height:2px;background:#bdbdbd"></div>
<div class="a" style="left:72px;top:750px;width:1082px;height:20px;background:#fff"></div>
<div class="a" style="left:1138px;top:750px;width:16px;height:20px;background:#f7f7f7"></div>
<div class="a" style="left:1142px;top:750px;width:8px;height:17px;border-radius:4px;background:#7e7e7e"></div>
<div class="a" style="left:76px;top:752px;font-size:13.8px;line-height:14px;color:#0a0ad8;white-space:nowrap"><i>Opdracht:</i> line</div>
<div class="a" style="left:72px;top:770px;width:1082px;height:1px;background:#c4c4c4"></div>
<div class="a" style="left:72px;top:771px;width:1082px;height:27px;background:#ececec"></div>
<div class="a" style="left:73px;top:778px;font-size:14px;line-height:14px;color:#111;white-space:nowrap">Opdracht:</div>
<div class="a" style="left:137px;top:776px;width:990px;height:18px;background:#fff"></div>
<div class="a" style="left:1127px;top:772px;width:26px;height:25px;background:linear-gradient(#f4f4f4,#e6e6e6);border:1px solid #bdbdbd"></div>
<svg class="a" style="left:1133px;top:780px" width="14" height="10"><rect x="0.5" y="0.5" width="13" height="9" fill="#fff" stroke="#333" stroke-width="1"/><rect x="0.5" y="0.5" width="13" height="2.3" fill="#000"/><rect x="10.5" y="1.2" width="1" height="0.8" fill="#fff"/></svg>
<div class="a" style="left:1153px;top:748px;width:1px;height:50px;background:#a8a8a8"></div>


<!-- DOCK -->
<div class="a" style="left:1154px;top:107px;width:2px;height:691px;background:#c2c2c2"></div>
<div class="a" style="left:1156px;top:108px;width:298px;height:22px;background:linear-gradient(#ececec,#e2e2e2 70%,#d9d9d9)"></div>
<div class="a" style="left:1157px;top:111px;width:14px;height:14px;border-radius:50%;background:#6c6c6c"></div>
<svg class="a" style="left:1157px;top:111px" width="14" height="14"><path d="M3.8 5L5 3.8L7 5.8L9 3.8L10.2 5L8.2 7L10.2 9L9 10.2L7 8.2L5 10.2L3.8 9L5.8 7Z" fill="#fff"/></svg>
<div class="a" style="left:1175px;top:111px;width:14px;height:14px;border-radius:50%;background:#6c6c6c"></div>
<svg class="a" style="left:1175px;top:111px" width="14" height="14"><rect x="5.5" y="3.6" width="5" height="4" fill="none" stroke="#fff" stroke-width="1.1"/><rect x="3.3" y="6" width="5.4" height="4.4" fill="#6c6c6c" stroke="#fff" stroke-width="1.1"/></svg>
<div class="a" style="left:1272px;top:113px;width:100px;text-align:center;font-size:12px;line-height:12px;color:#262626">Lagenlijst</div>
<div class="a" style="left:1156px;top:130px;width:298px;height:26px;background:#a9a9a9"></div>
<div class="a dbtn" style="left:1156px;top:131px;width:58px"></div>
<div class="a dbtn" style="left:1216px;top:131px;width:58px"></div>
<div class="a dbtn" style="left:1276px;top:131px;width:58px"></div>
<div class="a dbtn" style="left:1336px;top:131px;width:58px"></div>
<div class="a dbtn" style="left:1396px;top:131px;width:58px"></div>
<!-- eye black -->
<svg class="a" style="left:1177px;top:136px" width="16" height="13" viewBox="0 0 16 13"><path d="M0.4 6.8C1.8 3 5 1 8 1C11 1 14.2 3 15.6 6.8C14 10.3 11 11.9 8 11.9C5 11.9 2 10.3 0.4 6.8Z" fill="#000"/><ellipse cx="7.8" cy="7" rx="5" ry="3.3" fill="#fff"/><circle cx="7.8" cy="5.9" r="2.9" fill="#000"/><path d="M6.6 4.2L8 6" stroke="#777" stroke-width="0.7"/></svg>
<!-- eye gray -->
<svg class="a" style="left:1237px;top:136px" width="16" height="13" viewBox="0 0 16 13"><path d="M0.4 6.8C1.8 3 5 1 8 1C11 1 14.2 3 15.6 6.8C14 10.3 11 11.9 8 11.9C5 11.9 2 10.3 0.4 6.8Z" fill="#a0a0a0"/><ellipse cx="7.8" cy="7" rx="5" ry="3.3" fill="#f0f0f0"/><circle cx="7.8" cy="5.9" r="2.9" fill="#a0a0a0"/></svg>
<!-- plus -->
<svg class="a" style="left:1298px;top:136px" width="14" height="14"><path d="M7 1V13M1 7H13" stroke="#e00000" stroke-width="2.8"/></svg>
<!-- minus -->
<svg class="a" style="left:1358px;top:136px" width="14" height="14"><path d="M1 7H13" stroke="#e00000" stroke-width="2.6"/></svg>
<!-- pencil -->
<svg class="a" style="left:1416px;top:135px" width="18" height="17"><path d="M2.3 14.8L4 10.8L13.4 1.4L15.6 3.6L6.2 13Z" fill="#d9a540" stroke="#8a6420" stroke-width="0.7"/><path d="M13.4 1.4L15.6 3.6L16.4 2.8C16.8 2.2 16.4 1.3 15.8 0.9C15.2 0.5 14.6 0.5 14.2 0.9Z" fill="#e02020"/><path d="M2.3 14.8L4 10.8L6.2 13Z" fill="#f0d8a8"/><path d="M2.3 14.8L2.9 13.4L3.7 14.2Z" fill="#333"/></svg>
<!-- list -->
<div class="a" style="left:1156px;top:156px;width:298px;height:642px;background:#fff"></div>
<div class="a" style="left:1161px;top:163px;width:16px;height:9px;border:1.3px solid #111"></div>
<div class="a" style="left:1183px;top:161px;font-size:13px;line-height:13px;color:#111">0</div>
<svg class="a" style="left:1393px;top:160px" width="16" height="15"><path d="M1.5 13.8L3 10.2L11.5 1.7L13.5 3.7L5 12.2Z" fill="#d9a540" stroke="#8a6420" stroke-width="0.7"/><path d="M11.5 1.7L13.5 3.7L14.2 3C14.6 2.5 14.3 1.7 13.8 1.3C13.3 0.9 12.7 0.9 12.3 1.3Z" fill="#e02020"/><path d="M1.5 13.8L3 10.2L5 12.2Z" fill="#f0d8a8"/></svg>
<svg class="a" style="left:1415px;top:160px" width="16" height="13" viewBox="0 0 16 13"><path d="M0.4 6.8C1.8 3 5 1 8 1C11 1 14.2 3 15.6 6.8C14 10.3 11 11.9 8 11.9C5 11.9 2 10.3 0.4 6.8Z" fill="#000"/><ellipse cx="7.8" cy="7" rx="5" ry="3.3" fill="#fff"/><circle cx="7.8" cy="5.9" r="2.9" fill="#000"/><path d="M6.6 4.2L8 6" stroke="#777" stroke-width="0.7"/></svg>
<svg class="a" style="left:1439px;top:159px" width="12" height="15"><path d="M3 7V4.5C3 2.5 4.3 1.3 6 1.3C7.7 1.3 9 2.5 9 4.5V7" fill="none" stroke="#b8b8b8" stroke-width="1.4"/><rect x="1" y="7" width="10" height="7.5" fill="#b8b8b8"/></svg>


<!-- RIGHT STRIP -->
<div class="a" style="left:1454px;top:107px;width:46px;height:691px;background:linear-gradient(90deg,#c9c9c9 0,#c9c9c9 1px,#ececec 2px,#e2e2e2 45%,#d0d0d0 85%,#c4c4c4 100%)"></div>
<div class="a" style="left:1462px;top:116px;width:26px;height:2px;background-image:linear-gradient(90deg,#9a9a9a 0,#9a9a9a 2px,transparent 2px);background-size:6px 2px"></div>
<div class="selb" style="left:1456px;top:120px;width:43px;height:42px"></div>
<div class="a" style="left:1456px;top:261px;width:44px;height:1px;background-image:linear-gradient(90deg,#777 0,#777 1px,transparent 1px);background-size:3px 1px"></div>
<div class="a" style="left:1456px;top:409px;width:44px;height:1px;background-image:linear-gradient(90deg,#777 0,#777 1px,transparent 1px);background-size:3px 1px"></div>
<div class="selb" style="left:1456px;top:417px;width:43px;height:43px"></div>
<!-- tab icons -->
<div class="a tabi" style="top:127px"></div>
<svg class="a" style="left:1463px;top:127px" width="28" height="28"><g transform="translate(0,0)"><path d="M9 14L14 11.5V21L9 23.5Z" fill="#bdbdbd" stroke="#555" stroke-width="0.7"/><path d="M11 13L21 9V19L11 23Z" fill="#fff" stroke="#555" stroke-width="0.7"/><path d="M14 21L18 13L19 19Z" fill="none" stroke="#ff3030" stroke-width="0.8"/></g></svg>
<div class="a tabi" style="top:174px"></div>
<svg class="a" style="left:1463px;top:174px" width="28" height="28"><rect x="7.5" y="9.5" width="10" height="7" fill="#f5ecc8" stroke="#776" stroke-width="0.8"/><circle cx="16" cy="16.5" r="4.2" fill="#f2e8c0" stroke="#776" stroke-width="0.8"/></svg>
<div class="a tabi" style="top:220px"></div>
<svg class="a" style="left:1463px;top:220px" width="28" height="28"><rect x="6" y="10" width="16" height="11" rx="2" fill="#f4f4f4" stroke="#c8d4e8" stroke-width="0.8"/></svg>
<div class="a tabi" style="top:276px"></div>
<svg class="a" style="left:1463px;top:276px" width="28" height="28"><g fill="#000"><rect x="3" y="8" width="3" height="3"/><rect x="3" y="14" width="3" height="3"/><rect x="3" y="19.5" width="3" height="3"/></g><g fill="none" stroke="#222" stroke-width="0.8"><rect x="10" y="8.3" width="14" height="2.6"/><rect x="10" y="14.1" width="14" height="2.6"/><rect x="10" y="19.8" width="14" height="2.6"/></g></svg>
<div class="a tabi" style="top:322px"></div>
<svg class="a" style="left:1463px;top:322px" width="28" height="28"><path d="M7 10.5C7 9 21 9 21 10.5L15.5 16V23L13.5 22V16Z" fill="#9a9a9a"/><ellipse cx="14" cy="10.5" rx="7" ry="1.8" fill="#666"/></svg>
<div class="a tabi" style="top:368px"></div>
<svg class="a" style="left:1463px;top:368px" width="28" height="28"><path d="M6 9V23L11 19.5V12.5Z" fill="#fff" stroke="#444" stroke-width="0.8"/><rect x="11" y="12.5" width="9" height="7" fill="#ddd" stroke="#444" stroke-width="0.8"/><path d="M3 16H25" stroke="#f08080" stroke-width="0.8" stroke-dasharray="2 1"/></svg>
<div class="a tabi" style="top:424px"></div>
<svg class="a" style="left:1463px;top:424px" width="28" height="28"><g fill="#999"><rect x="3" y="8.5" width="11" height="1"/><rect x="3" y="11.5" width="9" height="1"/><rect x="3" y="14.5" width="12" height="1"/><rect x="3" y="17.5" width="12" height="1"/></g><rect x="0.5" y="22" width="27" height="5.5" fill="#fff" stroke="#333" stroke-width="0.8"/><path d="M3 25H5M9 25H20" stroke="#555" stroke-width="0.9"/></svg>
<div class="a tabi" style="top:471px"></div>
<svg class="a" style="left:1463px;top:471px" width="28" height="28"><rect x="8" y="10" width="12" height="15" rx="1" fill="#c8882a"/><rect x="9.5" y="11.5" width="9" height="12" fill="#f6f6f6"/><rect x="11" y="8.5" width="6" height="3" rx="0.8" fill="#888"/><g stroke="#bbb" stroke-width="0.7"><path d="M11 14H17M11 16H17M11 18H16M11 20H15"/></g></svg>


<!-- STATUS -->
<div class="a status"></div>
<div class="st" style="left:2px;top:808px;letter-spacing:0.3px">30,19.8</div>
<div class="st" style="left:2px;top:828px;letter-spacing:0.62px">@-90,-40.2</div>
<div class="a" style="left:254px;top:803px;width:1px;height:39px;background:#8c8c8c"></div>
<div class="st" style="left:256px;top:808px;letter-spacing:0.78px">35.945&lt;33°</div>
<div class="st" style="left:256px;top:828px;letter-spacing:0.65px">@98.57&lt;204°</div>
<div class="a" style="left:506px;top:819px;width:7px;height:7px;border-radius:50%;background:#c8c8c8"></div>
<div class="st" style="left:572px;top:818px;letter-spacing:0.43px">Object of gebied selecteren</div>
<svg class="a" style="left:716px;top:805px" width="20" height="32"><path d="M10 1.2C5 1.2 1.7 4.5 1.7 10V22C1.7 27.5 5 30.8 10 30.8C15 30.8 18.3 27.5 18.3 22V10C18.3 4.5 15 1.2 10 1.2Z" fill="#fff" stroke="#444" stroke-width="0.9"/><path d="M1.9 14.8C5 13.6 15 13.6 18.1 14.8" stroke="#333" stroke-width="1.2" fill="none"/><rect x="8.6" y="3.6" width="2.8" height="7" rx="1.3" fill="#fff" stroke="#333" stroke-width="0.8"/><path d="M10 1.5V3.6M10 10.6V14" stroke="#333" stroke-width="0.9"/></svg>
<div class="a" style="left:940px;top:819px;width:7px;height:7px;border-radius:50%;background:#c8c8c8"></div>
<div class="st" style="left:949px;top:818px;letter-spacing:0.4px">Geen objecten geselecteerd.</div>
<div class="a" style="left:1269px;top:819px;width:7px;height:7px;border-radius:50%;background:#c8c8c8"></div>


</body></html>
